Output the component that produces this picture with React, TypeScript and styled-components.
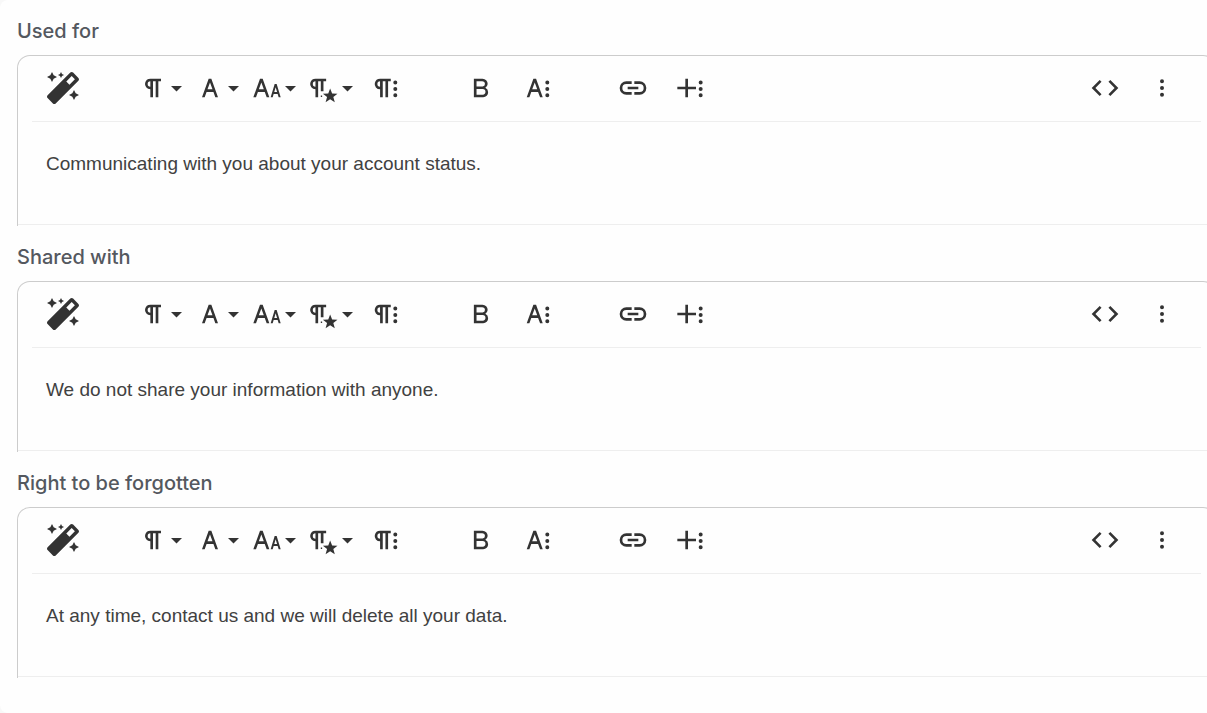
import React from "react";
import styled, { createGlobalStyle } from "styled-components";
import { FaMagic } from "react-icons/fa";

const GlobalStyle = createGlobalStyle`
  *, *::before, *::after { box-sizing: border-box; }
  body { margin: 0; background: #f8f8f8; }
`;

const Card = styled.main`
  min-height: 100vh;
  padding: 16px 0 0 17px;
  overflow: hidden;
  border-radius: 8px 0 0 8px;
  background: #fefefe;
`;

const Field = styled.section`
  margin-bottom: 16px;
`;

const Label = styled.label`
  display: block;
  height: 39px;
  color: #54585f;
  font: 500 20px/30px Inter, "Open Sans", sans-serif;
`;

/* The editor runs past the right edge of the card and is clipped by it. */
const Editor = styled.div`
  margin-right: -9px;
  border: 1px solid #cccccc;
  border-bottom: 0;
  border-radius: 13px 13px 0 0;
  padding-bottom: 1px;
`;

const Toolbar = styled.div`
  display: flex;
  align-items: center;
  gap: 38px;
  height: 66px;
  margin: 0 14px;
  padding: 0 10px 2px 3px;
  border-bottom: 1px solid #eeeeee;
`;

const ToolGroup = styled.div<{ $end?: boolean }>`
  display: flex;
  margin-left: ${(p) => (p.$end ? "auto" : "0")};
`;

const ToolButton = styled.button<{ $menu?: boolean }>`
  display: flex;
  align-items: center;
  gap: 2px;
  width: 57px;
  height: 50px;
  padding: 0 0 0 ${(p) => (p.$menu ? "7px" : "12px")};
  border: 0;
  background: transparent;
  color: #333333;
  cursor: pointer;
`;

const Glyph = styled.svg`
  display: block;
  flex: none;
  width: 32px;
  height: 32px;
  fill: currentColor;
`;

const Caret = styled.svg`
  flex: none;
  width: 11px;
  height: 6px;
  margin-top: 2px;
  fill: currentColor;
`;

const Content = styled.textarea`
  display: block;
  width: 100%;
  height: 103px;
  padding: 28px 28px 0;
  border: 0;
  border-bottom: 1px solid #eeeeee;
  outline: none;
  resize: none;
  background: transparent;
  color: #414141;
  font: 19px/28px "Liberation Sans", Arial, sans-serif;
`;

const dots = (x: number, ys: number[]) =>
  ys
    .map((y) => `M${x + 1.5},${y}a1.5,1.5,0,1,1-3,0a1.5,1.5,0,1,1,3,0Z`)
    .join("");

const sideDots = dots(18.97, [7.95, 12.72, 17.49]);

const icons = {
  paragraph:
    "M10.15,5A4.11,4.11,0,0,0,6.08,8.18,4,4,0,0,0,10,13v6h2V7h2V19h2V7h2V5ZM8,9a2,2,0,0,1,2-2v4A2,2,0,0,1,8,9Z",
  font: "M16,19h2L13,5H11L6,19H8l1.43-4h5.15Zm-5.86-6L12,7.8,13.86,13Z",
  size: "M20.75,19h1.5l-3-10h-1.5l-3,10h1.5L17,16.5h3Zm-3.3-4,1.05-3.5L19.55,15Zm-5.7,4h2l-5-14h-2l-5,14h2l1.43-4h5.14ZM5.89,13,7.75,7.8,9.61,13Z",
  style:
    "M5.75,5A4.11,4.11,0,0,0,1.68,8.18,4,4,0,0,0,5.6,13v6h2V7h2v7.5h2V7h2V5ZM3.6,9a2,2,0,0,1,2-2v4A2,2,0,0,1,3.6,9ZM9.6,17.6h1v1.2h-1ZM16.6,12.4l1.5,3.7,4,.2-3.1,2.5,1.1,3.9L16.6,20.5l-3.4,2.2,1.1-3.9-3.1-2.5,4-.2Z",
  paragraphMore:
    "M7.68,5a4.11,4.11,0,0,0-4.07,3.18,4,4,0,0,0,3.96,4.82v6h2V7h2V19h2V7h2V5ZM5.53,9a2,2,0,0,1,2-2v4A2,2,0,0,1,5.53,9Z" +
    sideDots,
  bold: "M15.25,11.8A3.68,3.68,0,0,0,17,9a3.93,3.93,0,0,0-3.86-4H6.65V19h7a3.74,3.74,0,0,0,3.7-3.78V15.1A3.64,3.64,0,0,0,15.25,11.8ZM8.65,7h4.2a2.09,2.09,0,0,1,1.3.4,1.59,1.59,0,0,1,.8,1.6,1.81,1.81,0,0,1-1.9,1.8H8.65Zm4.6,10H8.65V12.8h4.6a2.18,2.18,0,0,1,2.1,2.1A2.1,2.1,0,0,1,13.25,17Z",
  textMore:
    "M13.55,19h2l-5-14h-2l-5,14h2l1.4-4h5.1Zm-5.9-6,1.9-5.2L11.4,13Z" + sideDots,
  link: "M11,17H7A5,5,0,0,1,7,7h4V9H7a3,3,0,0,0,0,6h4ZM17,7H13V9h4a3,3,0,0,1,0,6H13v2h4A5,5,0,0,0,17,7Zm-1,4H8v2h8Z",
  insertMore: "M16.5,13h-6v6h-2V13h-6V11h6V5h2v6h6Z" + dots(20, [7.95, 12.72, 17.49]),
  code: "M9.4,16.6,4.8,12,9.4,7.4,8,6,2,12l6,6Zm5.2,0L19.2,12,14.6,7.4,16,6l6,6-6,6Z",
  more: dots(12, [7, 12, 17]),
};

type ToolProps = { icon: keyof typeof icons; name: string; menu?: boolean };

const Tool = ({ icon, name, menu }: ToolProps) => (
  <ToolButton type="button" aria-label={name} $menu={menu}>
    <Glyph viewBox="0 0 24 24" aria-hidden="true">
      <path d={icons[icon]} />
    </Glyph>
    {menu && (
      <Caret viewBox="0 0 11 6" aria-hidden="true">
        <path d="M0,0H11L5.5,5.5Z" />
      </Caret>
    )}
  </ToolButton>
);

type RichFieldProps = { id: string; label: string; value: string };

const RichField = ({ id, label, value }: RichFieldProps) => (
  <Field>
    <Label htmlFor={id}>{label}</Label>
    <Editor>
      <Toolbar role="toolbar" aria-label={label}>
        <ToolGroup>
          <ToolButton type="button" aria-label="Magic">
            <Glyph as={FaMagic} aria-hidden="true" />
          </ToolButton>
        </ToolGroup>
        <ToolGroup>
          <Tool icon="paragraph" name="Paragraph format" menu />
          <Tool icon="font" name="Font family" menu />
          <Tool icon="size" name="Font size" menu />
          <Tool icon="style" name="Paragraph style" menu />
          <Tool icon="paragraphMore" name="More paragraph" />
        </ToolGroup>
        <ToolGroup>
          <Tool icon="bold" name="Bold" />
          <Tool icon="textMore" name="More text" />
        </ToolGroup>
        <ToolGroup>
          <Tool icon="link" name="Insert link" />
          <Tool icon="insertMore" name="More rich" />
        </ToolGroup>
        <ToolGroup $end>
          <Tool icon="code" name="Code view" />
          <Tool icon="more" name="More misc" />
        </ToolGroup>
      </Toolbar>
      <Content id={id} defaultValue={value} spellCheck={false} />
    </Editor>
  </Field>
);

export default function App() {
  return (
    <>
      <GlobalStyle />
      <Card>
        <RichField
          id="used-for"
          label="Used for"
          value="Communicating with you about your account status."
        />
        <RichField
          id="shared-with"
          label="Shared with"
          value="We do not share your information with anyone."
        />
        <RichField
          id="forgotten"
          label="Right to be forgotten"
          value="At any time, contact us and we will delete all your data."
        />
      </Card>
    </>
  );
}
